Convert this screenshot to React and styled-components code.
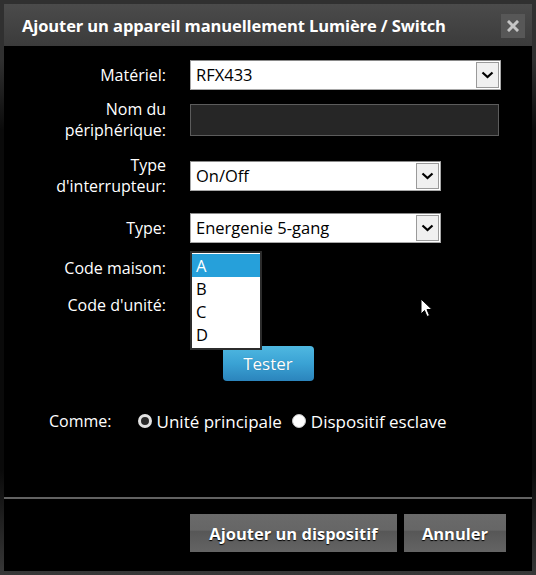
import React from 'react';
import styled, { createGlobalStyle } from 'styled-components';

const Global = createGlobalStyle`
  html, body { margin: 0; padding: 0; background: #000; }
  body { font-family: "Open Sans", "Noto Sans", sans-serif; }
  * { box-sizing: border-box; }
`;

const Dialog = styled.div`
  position: relative;
  width: 536px;
  height: 575px;
  display: flex;
  flex-direction: column;
  background: #000;
  border: 4px solid #303030;
  border-image: linear-gradient(to bottom, #303030 0, #303030 60px, #0a0a0a 130px, #0a0a0a 470px, #383838 100%) 4;
`;

const TitleBar = styled.div`
  height: 42px;
  flex: none;
  display: flex;
  align-items: center;
  justify-content: space-between;
  padding: 0 7px 0 18px;
  background: linear-gradient(to bottom, #4b4b4b, #3b3b3b);
`;

const Title = styled.h1`
  margin: 0;
  font-size: 16.5px;
  font-weight: 700;
  color: #fff;
  letter-spacing: -0.1px;
`;

const CloseButton = styled.button`
  width: 24px;
  height: 24px;
  margin-top: 2px;
  padding: 0;
  border: 0;
  background: #575757;
  display: flex;
  align-items: center;
  justify-content: center;
`;

const Body = styled.div`
  flex: 1;
  display: flex;
  flex-direction: column;
  padding-top: 10px;
`;

const FormGrid = styled.div`
  display: grid;
  grid-template-columns: 162px 1fr;
  grid-template-rows: 38px 52px 59px 46px 34px 40px;
  column-gap: 24px;
  align-items: center;
`;

const Label = styled.div`
  color: #fff;
  font-size: 16px;
  line-height: 21px;
  text-align: right;
`;

const Cell = styled.div`
  position: relative;
  align-self: ${(p) => (p.$top ? 'start' : 'center')};
  height: ${(p) => (p.$top ? '100%' : 'auto')};
`;

const SelectBox = styled.div`
  width: ${(p) => p.$w}px;
  height: 30px;
  display: flex;
  align-items: stretch;
  background: #fff;
  border: 1px solid #a8a8a8;
  border-top-color: #8a8a8a;
  padding: 1px;
`;

const SelectValue = styled.div`
  flex: 1;
  padding-left: 4px;
  font-size: 16.5px;
  line-height: 26px;
  color: #000;
`;

const SelectArrow = styled.div`
  width: 23px;
  background: #f0f0f0;
  border: 1px solid #9a9a9a;
  display: flex;
  align-items: center;
  justify-content: center;
`;

const TextField = styled.input`
  width: 309px;
  height: 32px;
  background: #262626;
  border: 1px solid #5c5c5c;
  color: #fff;
  font: inherit;
  padding: 0 5px;
  outline: none;
`;

const Popup = styled.ul`
  position: absolute;
  top: 0;
  left: 0;
  width: 72px;
  margin: 0;
  padding: 1px 0 2px;
  list-style: none;
  background: #fff;
  border: 2px solid #2c2c2c;
  z-index: 2;
`;

const PopupItem = styled.li`
  height: 23px;
  padding-left: 4px;
  font-size: 16.5px;
  line-height: 23px;
  color: ${(p) => (p.$active ? '#fff' : '#000')};
  background: ${(p) => (p.$active ? '#26a0da' : 'transparent')};
`;

const Center = styled.div`
  display: flex;
  justify-content: center;
  margin-top: 21px;
`;

const TestButton = styled.button`
  width: 91px;
  height: 35px;
  border: 0;
  border-radius: 4px;
  background: linear-gradient(to bottom, #4fb8e1 0%, #3aa2d4 50%, #2b84bc 100%);
  color: #fff;
  font-family: inherit;
  font-size: 17px;
  padding: 0;
  text-shadow: 0 0 1px rgba(0, 0, 0, 0.3);
`;

const RadioRow = styled.div`
  display: flex;
  align-items: center;
  margin-top: 30px;
  padding-left: 45px;
  color: #fff;
  font-size: 16px;
  height: 20px;
`;

const RadioLabelText = styled.span`
  margin-right: 26px;
`;

const RadioOption = styled.label`
  display: flex;
  align-items: center;
  gap: 5px;
  margin-right: 10px;
  font-size: 17px;
`;

const RadioDot = styled.span`
  width: 14px;
  height: 14px;
  border-radius: 50%;
  flex: none;
  background: ${(p) => (p.$checked ? '#2a2a2a' : '#fff')};
  border: ${(p) => (p.$checked ? '3px solid #e2e2e2' : '1px solid #c4c4c4')};
`;

const Footer = styled.div`
  flex: none;
  display: flex;
  justify-content: flex-end;
  gap: 7px;
  padding: 15px 26px 19px;
  border-top: 2px solid #626262;
`;

const FooterButton = styled.button`
  width: ${(p) => p.$w}px;
  height: 38px;
  border: 0;
  padding: 0;
  background: linear-gradient(to bottom, #6a6a6a 0%, #666 42%, #575757 46%, #646464 100%);
  color: #fff;
  font-family: inherit;
  font-weight: 700;
  font-size: 16.5px;
  text-shadow: 0 1px 1px #000;
`;

const Cursor = styled.svg`
  position: absolute;
  left: 416px;
  top: 294px;
`;

const Chevron = () => (
  <svg width="13" height="8" viewBox="0 0 13 8">
    <path d="M1.5 1.5 L6.5 6 L11.5 1.5" fill="none" stroke="#000" strokeWidth="2.2" />
  </svg>
);

const Select = ({ value, w }) => (
  <SelectBox $w={w}>
    <SelectValue>{value}</SelectValue>
    <SelectArrow>
      <Chevron />
    </SelectArrow>
  </SelectBox>
);

export default function App() {
  return (
    <>
      <Global />
      <Dialog>
        <TitleBar>
          <Title>Ajouter un appareil manuellement Lumière / Switch</Title>
          <CloseButton aria-label="close">
            <svg width="12" height="12" viewBox="0 0 12 12">
              <path d="M2 2 L10 10 M10 2 L2 10" stroke="#c6c6c6" strokeWidth="3" strokeLinecap="square" />
            </svg>
          </CloseButton>
        </TitleBar>
        <Body>
          <FormGrid>
            <Label>Matériel:</Label>
            <Cell><Select value="RFX433" w={311} /></Cell>

            <Label>Nom du<br />périphérique:</Label>
            <Cell><TextField /></Cell>

            <Label>Type<br />d'interrupteur:</Label>
            <Cell><Select value="On/Off" w={251} /></Cell>

            <Label>Type:</Label>
            <Cell><Select value="Energenie 5-gang" w={251} /></Cell>

            <Label>Code maison:</Label>
            <Cell $top>
              <Popup>
                <PopupItem $active>A</PopupItem>
                <PopupItem>B</PopupItem>
                <PopupItem>C</PopupItem>
                <PopupItem>D</PopupItem>
              </Popup>
            </Cell>

            <Label>Code d'unité:</Label>
            <Cell />
          </FormGrid>

          <Center>
            <TestButton>Tester</TestButton>
          </Center>

          <RadioRow>
            <RadioLabelText>Comme:</RadioLabelText>
            <RadioOption><RadioDot $checked />Unité principale</RadioOption>
            <RadioOption><RadioDot />Dispositif esclave</RadioOption>
          </RadioRow>
        </Body>
        <Footer>
          <FooterButton $w={207}>Ajouter un dispositif</FooterButton>
          <FooterButton $w={102}>Annuler</FooterButton>
        </Footer>
        <Cursor width="13" height="20" viewBox="0 0 13 20">
          <path d="M1 1 L1 16 L4.5 12.5 L7 18.5 L9.5 17.5 L7 11.5 L12 11.5 Z" fill="#fff" stroke="#000" strokeWidth="1" />
        </Cursor>
      </Dialog>
    </>
  );
}
